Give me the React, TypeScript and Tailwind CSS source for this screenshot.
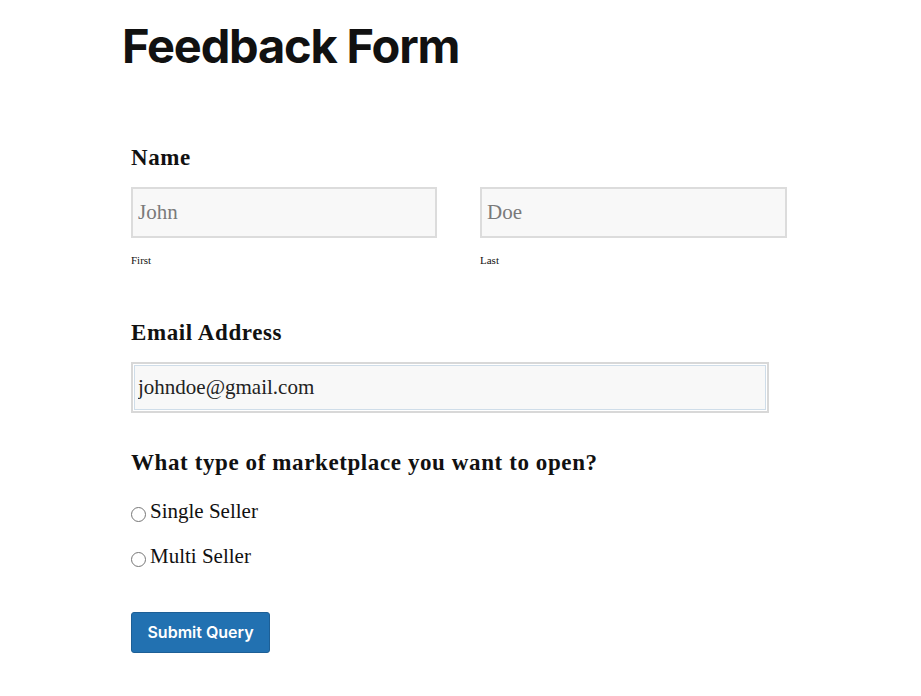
export default function App() {
  return (
    <div className="min-h-screen bg-white">
      <div className="pl-[122px] pt-[18px]">
        <h1 className="font-['Inter',sans-serif] text-[47px] font-bold leading-[56px] tracking-[-1.2px] text-[#111]">
          Feedback Form
        </h1>
      </div>

      <form className="pl-[131px] pt-[70px] font-['Liberation_Serif',serif] text-[#111]">
        {/* Name */}
        <div className="text-[23px] font-bold leading-7 tracking-[0.6px]">Name</div>
        <div className="mt-[15px] flex gap-[43px]">
          <div className="w-[306px]">
            <input
              placeholder="John"
              className="h-[51px] w-full border-2 border-[#dcdcdc] bg-[#f8f8f8] px-[5px] text-[21px] outline-none placeholder:text-[#7a7a7a]"
            />
            <div className="mt-[14px] text-[11px]">First</div>
          </div>
          <div className="w-[307px]">
            <input
              placeholder="Doe"
              className="h-[51px] w-full border-2 border-[#dcdcdc] bg-[#f8f8f8] px-[5px] text-[21px] outline-none placeholder:text-[#7a7a7a]"
            />
            <div className="mt-[14px] text-[11px]">Last</div>
          </div>
        </div>

        {/* Email */}
        <div className="mt-[50px] text-[23px] font-bold leading-7 tracking-[0.6px]">Email Address</div>
        <div className="mt-[15px] w-[638px] border-2 border-[#d8d8d8] p-px">
          <input
            defaultValue="johndoe@gmail.com"
            className="h-[45px] w-full border border-[#cfdde9] bg-[#f8f8f8] px-[3px] text-[21px] text-[#222] outline-none"
          />
        </div>

        {/* Marketplace */}
        <div className="mt-[36px] text-[23px] font-bold leading-7 tracking-[0.6px]">
          What type of marketplace you want to open?
        </div>
        <label className="mt-[20px] flex items-end gap-[4px] text-[21px] leading-7">
          <input type="radio" name="mp" className="mb-[3px] h-[15px] w-[15px]" />
          Single Seller
        </label>
        <label className="mt-[17px] flex items-end gap-[4px] text-[21px] leading-7">
          <input type="radio" name="mp" className="mb-[3px] h-[15px] w-[15px]" />
          Multi Seller
        </label>

        <button
          type="button"
          className="mt-[42px] h-[41px] w-[139px] rounded-[3px] border border-[#1d5f96] bg-[#2271b1] font-['Inter',sans-serif] text-[16px] font-semibold text-white"
        >
          Submit Query
        </button>
      </form>
    </div>
  );
}
